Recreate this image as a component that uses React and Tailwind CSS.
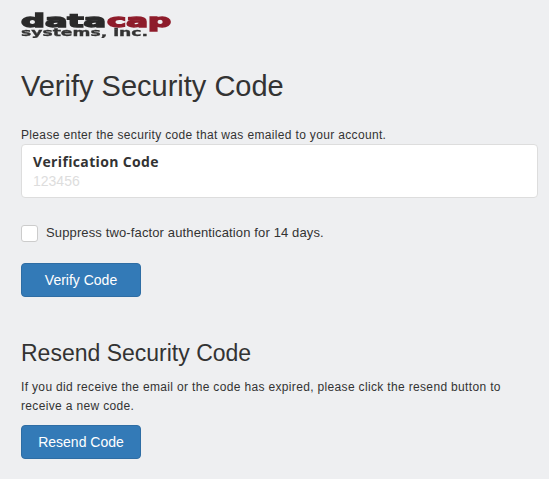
const Logo = () => (
  <svg width="152" height="40" viewBox="0 0 152 40" className="block blur-[0.4px]">
    <text x="0" y="27" fontFamily="'DejaVu Sans', sans-serif" fontWeight="700" fontSize="18" textLength="85" lengthAdjust="spacingAndGlyphs" fill="#2a2a2a" stroke="#2a2a2a" strokeWidth="1.4">
      data
    </text>
    <text x="86" y="27" fontFamily="'DejaVu Sans', sans-serif" fontWeight="700" fontSize="18" textLength="64" lengthAdjust="spacingAndGlyphs" fill="#8e1c2b" stroke="#8e1c2b" strokeWidth="1.4">
      cap
    </text>
    <text x="0" y="35.5" fontFamily="'DejaVu Sans', sans-serif" fontWeight="700" fontSize="10.5" textLength="127" lengthAdjust="spacingAndGlyphs" fill="#333" stroke="#333" strokeWidth="0.3">
      systems, inc.
    </text>
  </svg>
);

const BlueButton = ({ children }) => (
  <button className="block h-[34px] w-[120px] rounded border border-[#2e6da4] bg-[#337ab7] text-[14px] text-white">
    {children}
  </button>
);

export default function App() {
  return (
    <div className="min-h-[479px] bg-[#eeeff1] px-[21px] font-['Liberation_Sans',sans-serif] text-[#333]">
      <div className="h-[51px]">
        <Logo />
      </div>
      <h1 className="mt-[19px] text-[29px] leading-[32px]">Verify Security Code</h1>
      <p className="mt-[25px] text-[12px] leading-[17px] tracking-[0.34px]">
        Please enter the security code that was emailed to your account.
      </p>
      <div className="h-[54px] w-[517px] rounded-sm border border-[#ddd] bg-white px-[11px] pt-[7px]">
        <div className="font-['Open_Sans',sans-serif] text-[14px] font-bold leading-[20px] tracking-[0.35px]">Verification Code</div>
        <div className="text-[14px] leading-[19px] text-[#ddd]">123456</div>
      </div>
      <label className="mt-[27px] flex h-[17px] items-center gap-2">
        <span className="h-[17px] w-[17px] rounded-[3px] border border-[#ccc] bg-white" />
        <span className="pb-[2px] text-[13px] tracking-[0.13px]">Suppress two-factor authentication for 14 days.</span>
      </label>
      <div className="mt-[21px]">
        <BlueButton>Verify Code</BlueButton>
      </div>
      <h2 className="mt-[42px] text-[23px] leading-[28px]">Resend Security Code</h2>
      <p className="mt-[11px] w-[500px] text-[12px] leading-[19px] tracking-[0.34px]">
        If you did receive the email or the code has expired, please click the resend button to receive a new code.
      </p>
      <div className="mt-[9px]">
        <BlueButton>Resend Code</BlueButton>
      </div>
    </div>
  );
}
